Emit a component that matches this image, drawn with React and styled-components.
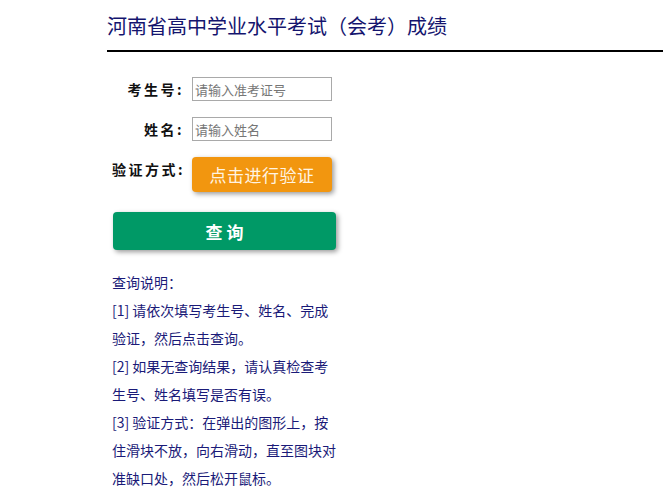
import React from "react";
import styled, { createGlobalStyle } from "styled-components";

const Global = createGlobalStyle`
  html, body { margin: 0; padding: 0; background: #fff; }
  body { font-family: "Noto Sans CJK SC", "Noto Sans", sans-serif; }
  * { box-sizing: border-box; }
`;

const Page = styled.div`
  padding-left: 107px;
`;

const Header = styled.div`
  padding-top: 12px;
  padding-bottom: 10px;
  border-bottom: 2px solid #000;
`;

const Title = styled.h1`
  margin: 0;
  font-size: 20px;
  line-height: 28px;
  font-weight: normal;
  color: #14146e;
`;

const Body = styled.div`
  padding-top: 25px;
  padding-left: 5px;
  width: 240px;
`;

const Form = styled.div`
  display: grid;
  grid-template-columns: 72px 140px;
  column-gap: 8px;
  row-gap: 16px;
  align-items: start;
`;

const Label = styled.label`
  text-align: right;
  font-size: 14px;
  line-height: 24px;
  font-weight: bold;
  color: #111;
  letter-spacing: 2.5px;
  white-space: nowrap;
`;

const Input = styled.input`
  width: 140px;
  height: 24px;
  border: 1px solid #a9a9a9;
  padding: 0 2px;
  font-family: inherit;
  font-size: 13px;
  color: #333;
  outline: none;
  &::placeholder { color: #767676; }
`;

const Button = styled.button`
  display: flex;
  align-items: center;
  justify-content: center;
  border: none;
  border-radius: 4px;
  color: ${(p) => (p.$variant === "green" ? "#fff" : "#fff4e2")};
  font-family: inherit;
  cursor: pointer;
  box-shadow: 2px 2px 5px rgba(0, 0, 0, 0.4);
  background: ${(p) => (p.$variant === "green" ? "#009966" : "#f2960f")};
  width: ${(p) => (p.$variant === "green" ? "223px" : "140px")};
  height: ${(p) => (p.$variant === "green" ? "38px" : "35px")};
  font-size: 17px;
  font-weight: ${(p) => (p.$variant === "green" ? "bold" : "normal")};
  letter-spacing: ${(p) => (p.$variant === "green" ? "4px" : "0.5px")};
  padding: 0;
  padding-left: ${(p) => (p.$variant === "green" ? "4px" : "0")};
`;

const SubmitRow = styled.div`
  margin-top: 20px;
  margin-left: 1px;
`;

const Help = styled.div`
  margin-top: 18px;
  width: 226px;
  font-size: 14px;
  line-height: 28px;
  color: #1a1a78;
`;

const HelpLine = styled.p`
  margin: 0;
`;

export default function App() {
  return (
    <>
      <Global />
      <Page>
        <Header>
          <Title>河南省高中学业水平考试（会考）成绩</Title>
        </Header>
        <Body>
          <Form>
            <Label>考生号:</Label>
            <Input placeholder="请输入准考证号" />
            <Label>姓名:</Label>
            <Input placeholder="请输入姓名" />
            <Label>验证方式:</Label>
            <Button>点击进行验证</Button>
          </Form>
          <SubmitRow>
            <Button $variant="green">查询</Button>
          </SubmitRow>
          <Help>
            <HelpLine>查询说明：</HelpLine>
            <HelpLine>[1] 请依次填写考生号、姓名、完成验证，然后点击查询。</HelpLine>
            <HelpLine>[2] 如果无查询结果，请认真检查考生号、姓名填写是否有误。</HelpLine>
            <HelpLine>[3] 验证方式：在弹出的图形上，按住滑块不放，向右滑动，直至图块对准缺口处，然后松开鼠标。</HelpLine>
          </Help>
        </Body>
      </Page>
    </>
  );
}
